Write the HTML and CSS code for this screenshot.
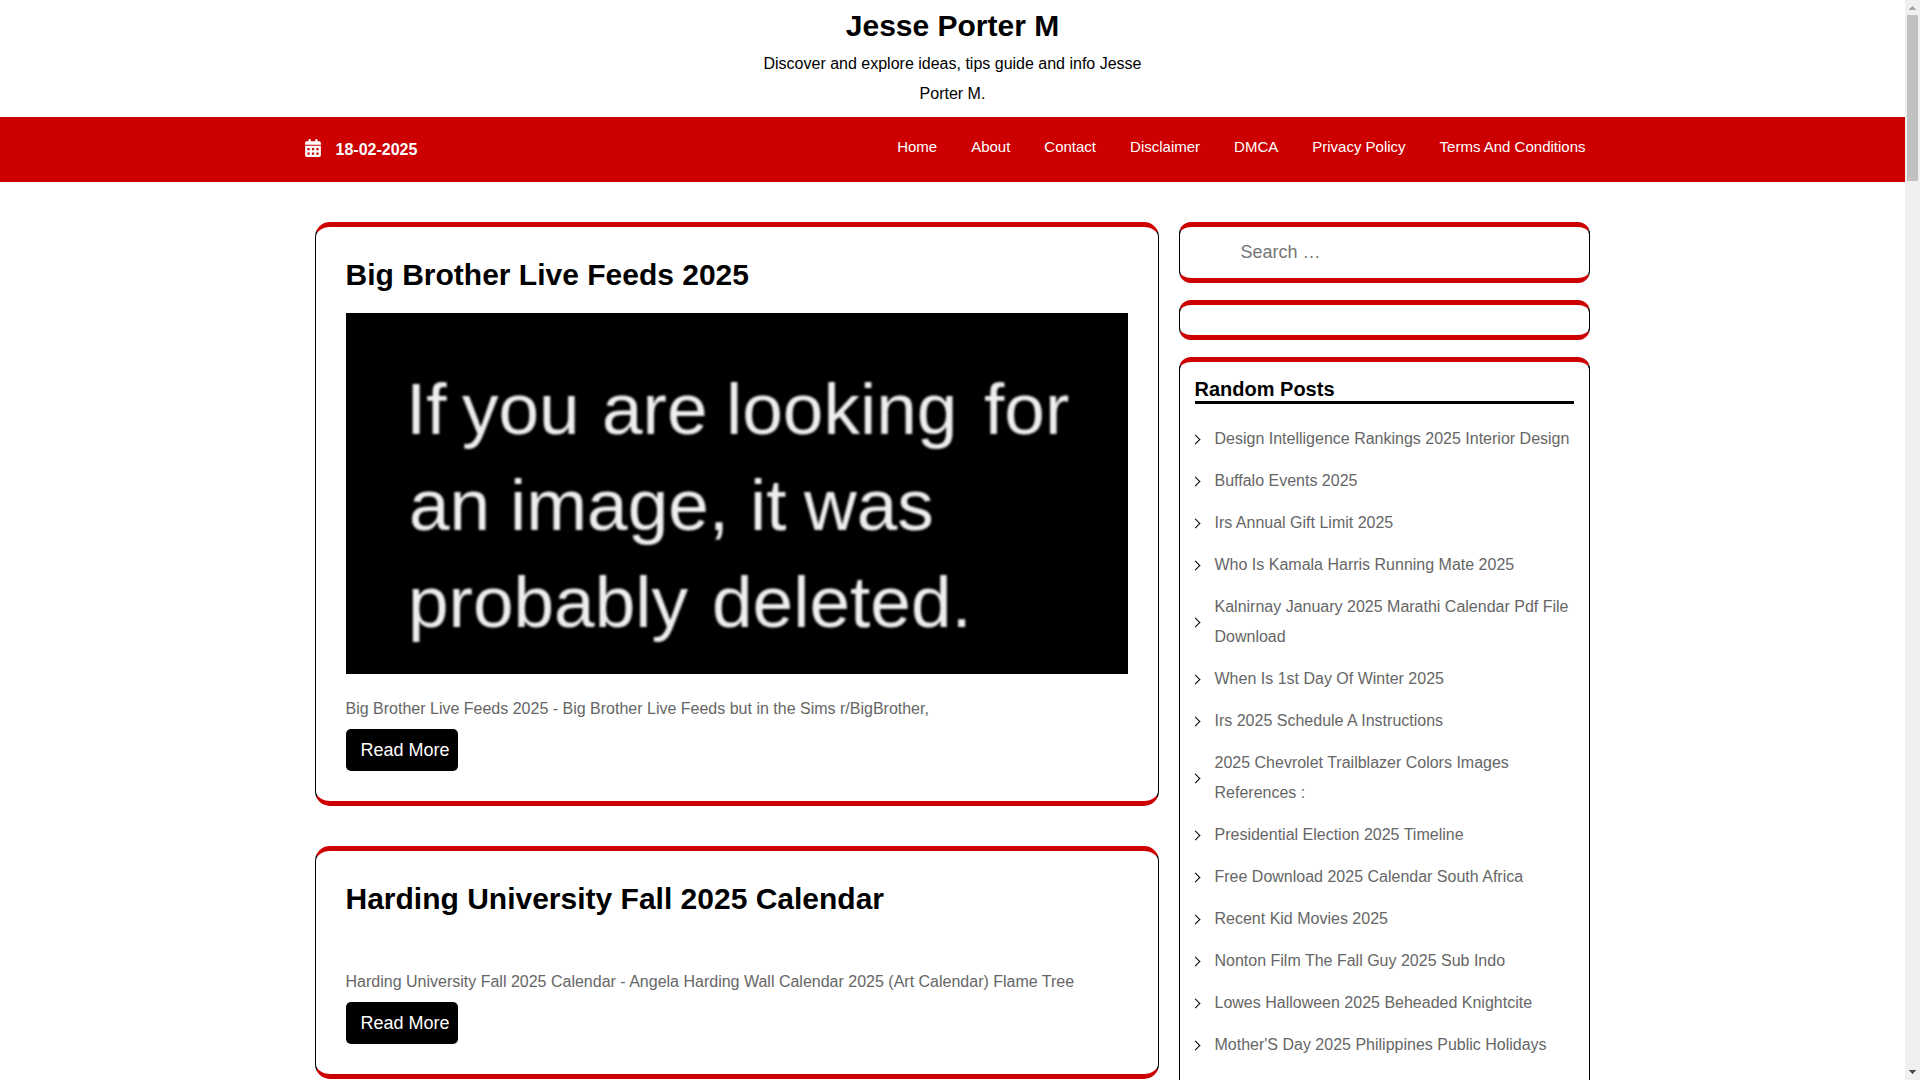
FILE: index.html
```html
<!DOCTYPE html>
<html lang="en">
<head>
    <meta charset="UTF-8">
    <meta name="viewport" content="width=device-width, initial-scale=1.0">
    <title>Jesse Porter M</title>
    <link rel="stylesheet" href="styles.css">
</head>
<body>

    <header class="site-header">
        <h1 class="site-title"><a href="#">Jesse Porter M</a></h1>
        <p class="site-description">Discover and explore ideas, tips guide and info Jesse Porter M.</p>
    </header>

    <div class="nav-bar">
        <div class="nav-inner">
            <div class="date">
                <svg class="date-icon" viewBox="0 0 448 512" aria-hidden="true">
                    <path fill-rule="evenodd" d="M128 0c17.7 0 32 14.3 32 32V64H288V32c0-17.700 14.300-32 32-32s32 14.300 32 32V64h48c26.500 0 48 21.500 48 48v48H0V112C0 85.500 21.500 64 48 64H96V32c0-17.700 14.300-32 32-32zM0 192H448V464c0 26.500-21.500 48-48 48H48c-26.500 0-48-21.500-48-48V192zM64 256v64h64V256H64zM192 256v64h64V256H192zM320 256v64h64V256H320zM64 384v64h64V384H64zM192 384v64h64V384H192zM320 384v64h64V384H320z"/>
                </svg>
                <span>18-02-2025</span>
            </div>
            <nav>
                <ul class="menu">
                    <li><a href="#">Home</a></li>
                    <li><a href="#">About</a></li>
                    <li><a href="#">Contact</a></li>
                    <li><a href="#">Disclaimer</a></li>
                    <li><a href="#">DMCA</a></li>
                    <li><a href="#">Privacy Policy</a></li>
                    <li><a href="#">Terms And Conditions</a></li>
                </ul>
            </nav>
        </div>
    </div>

    <div class="content">
        <main class="posts">
            <article class="post">
                <h2><a href="#">Big Brother Live Feeds 2025</a></h2>
                <div class="thumb">
                    <svg class="thumb-image" viewBox="0 0 782 361">
                        <rect width="782" height="361" fill="#000"/>
                        <g class="thumb-text">
                            <text y="121"><tspan x="60">If</tspan> <tspan x="116">you</tspan> <tspan x="256">are</tspan> <tspan x="380">looking</tspan> <tspan x="638">for</tspan></text>
                            <text y="217"><tspan x="63">an</tspan> <tspan x="164">image,</tspan> <tspan x="404">it</tspan> <tspan x="458">was</tspan></text>
                            <text y="314"><tspan x="62">probably</tspan> <tspan x="366">deleted.</tspan></text>
                        </g>
                    </svg>
                </div>
                <p>Big Brother Live Feeds 2025 - Big Brother Live Feeds but in the Sims r/BigBrother,</p>
                <a class="read-more" href="#">Read More</a>
            </article>

            <article class="post">
                <h2><a href="#">Harding University Fall 2025 Calendar</a></h2>
                <div class="thumb"></div>
                <p>Harding University Fall 2025 Calendar - Angela Harding Wall Calendar 2025 (Art Calendar) Flame Tree</p>
                <a class="read-more" href="#">Read More</a>
            </article>
        </main>

        <aside class="sidebar">
            <form class="widget widget-search" role="search">
                <input type="search" placeholder="Search …" aria-label="Search">
            </form>
            <div class="widget"></div>
            <section class="widget widget-posts">
                <h3>Random Posts</h3>
                <ul class="post-list">
                    <li><a href="#">Design Intelligence Rankings 2025 Interior Design</a></li>
                    <li><a href="#">Buffalo Events 2025</a></li>
                    <li><a href="#">Irs Annual Gift Limit 2025</a></li>
                    <li><a href="#">Who Is Kamala Harris Running Mate 2025</a></li>
                    <li><a href="#">Kalnirnay January 2025 Marathi Calendar Pdf File Download</a></li>
                    <li><a href="#">When Is 1st Day Of Winter 2025</a></li>
                    <li><a href="#">Irs 2025 Schedule A Instructions</a></li>
                    <li><a href="#">2025 Chevrolet Trailblazer Colors Images References :</a></li>
                    <li><a href="#">Presidential Election 2025 Timeline</a></li>
                    <li><a href="#">Free Download 2025 Calendar South Africa</a></li>
                    <li><a href="#">Recent Kid Movies 2025</a></li>
                    <li><a href="#">Nonton Film The Fall Guy 2025 Sub Indo</a></li>
                    <li><a href="#">Lowes Halloween 2025 Beheaded Knightcite</a></li>
                    <li><a href="#">Mother'S Day 2025 Philippines Public Holidays</a></li>
                </ul>
            </section>
        </aside>
    </div>

    <div class="scrollbar" aria-hidden="true">
        <svg class="arrow-up" viewBox="0 0 7 4" shape-rendering="crispEdges"><path d="M3 0h1v1h1v1h1v1h1v1H0V3h1V2h1V1h1z"/></svg>
        <div class="thumb-bar"></div>
        <svg class="arrow-down" viewBox="0 0 7 4" shape-rendering="crispEdges"><path d="M0 0h7v1H6v1H5v1H4v1H3V3H2V2H1V1H0z"/></svg>
    </div>

</body>
</html>
```
FILE: styles.css
```css
* {
    box-sizing: border-box;
    margin: 0;
    padding: 0;
}
body {
    font-family: "Liberation Sans", Arial, sans-serif;
    font-size: 16px;
    line-height: 30px;
    color: #666;
    background: #fff;
    height: 100vh;
    overflow: hidden;
    padding-right: 15px;
}
a {
    color: inherit;
    text-decoration: none;
}
ul {
    list-style: none;
}

/* header */
.site-header {
    padding: 8px 12px;
    text-align: center;
    color: #000;
}
.site-title {
    font-size: 30px;
    line-height: 36px;
    margin-bottom: 5px;
}
.site-description {
    max-width: 416px;
    margin: 0 auto;
}

/* red bar */
.nav-bar {
    background: #c00;
    color: #fff;
    padding: 15px 0;
}
.nav-inner {
    max-width: 1320px;
    margin: 0 auto;
    padding: 0 12px;
    display: flex;
    justify-content: space-between;
    align-items: flex-start;
}
.date {
    display: flex;
    align-items: center;
    gap: 15px;
    font-weight: bold;
    line-height: 35px;
}
.date-icon {
    width: 16px;
    height: 18px;
    margin-bottom: 3px;
    fill: #fff;
}
.menu {
    display: flex;
    flex-wrap: wrap;
    gap: 34px;
    padding-right: 15px;
    font-size: 15px;
}

/* two columns */
.content {
    max-width: 1320px;
    margin: 40px auto 0;
    padding: 0 23px 0 22px;
    display: grid;
    grid-template-columns: minmax(0, 1fr) 411px;
    gap: 20px;
    align-items: start;
}
.posts {
    display: grid;
    gap: 40px;
}
.post,
.widget {
    border: 1px solid #000;
    border-top: 5px solid #c00;
    border-bottom: 5px solid #c00;
}
.post {
    border-radius: 15px;
    padding: 30px;
}
.post h2 {
    font-size: 30px;
    line-height: 36px;
    color: #000;
    margin-bottom: 20px;
}
.thumb {
    min-height: 10px;
    margin-bottom: 20px;
}
.thumb-image {
    display: block;
    width: 100%;
}
.thumb-text {
    fill: #eee;
    font-size: 73px;
    filter: blur(1px);
}
.post p {
    margin-bottom: 5px;
}
.read-more {
    display: block;
    width: fit-content;
    padding: 6px 8px 6px 15px;
    border-radius: 5px;
    background: #000;
    color: #fff;
    font-size: 18px;
}

/* sidebar */
.sidebar {
    display: grid;
    gap: 17px;
}
.widget {
    border-radius: 12px;
    padding: 15px;
}
.widget-search {
    padding: 10px 15px 11px;
}
.widget-search input {
    display: block;
    width: 100%;
    height: 30px;
    padding: 0 0 0 46px;
    border: none;
    outline: none;
    background: none;
    font-family: inherit;
    font-size: 18px;
    color: #666;
}
.widget-posts {
    padding-bottom: 40px;
}
.widget h3 {
    font-size: 20px;
    line-height: 24px;
    color: #000;
    border-bottom: 3px solid #000;
    margin-bottom: 20px;
}
.post-list {
    display: grid;
    gap: 12px;
}
.post-list li {
    display: flex;
    align-items: center;
    gap: 16px;
}
.post-list li::before {
    content: "";
    flex: none;
    width: 6px;
    height: 6px;
    margin-left: -3px;
    border-top: 1px solid #000;
    border-right: 1px solid #000;
    transform: rotate(45deg);
}

/* scrollbar */
.scrollbar {
    position: fixed;
    top: 0;
    right: 0;
    bottom: 0;
    width: 15px;
    padding: 6px 2px;
    background: #f0f0f0;
    display: flex;
    flex-direction: column;
    align-items: center;
}
.scrollbar svg {
    width: 7px;
    height: 4px;
}
.arrow-up {
    fill: #a3a3a3;
}
.arrow-down {
    fill: #505050;
    margin-top: auto;
}
.thumb-bar {
    width: 11px;
    height: 166px;
    margin-top: 5px;
    background: #c1c1c1;
}
```
